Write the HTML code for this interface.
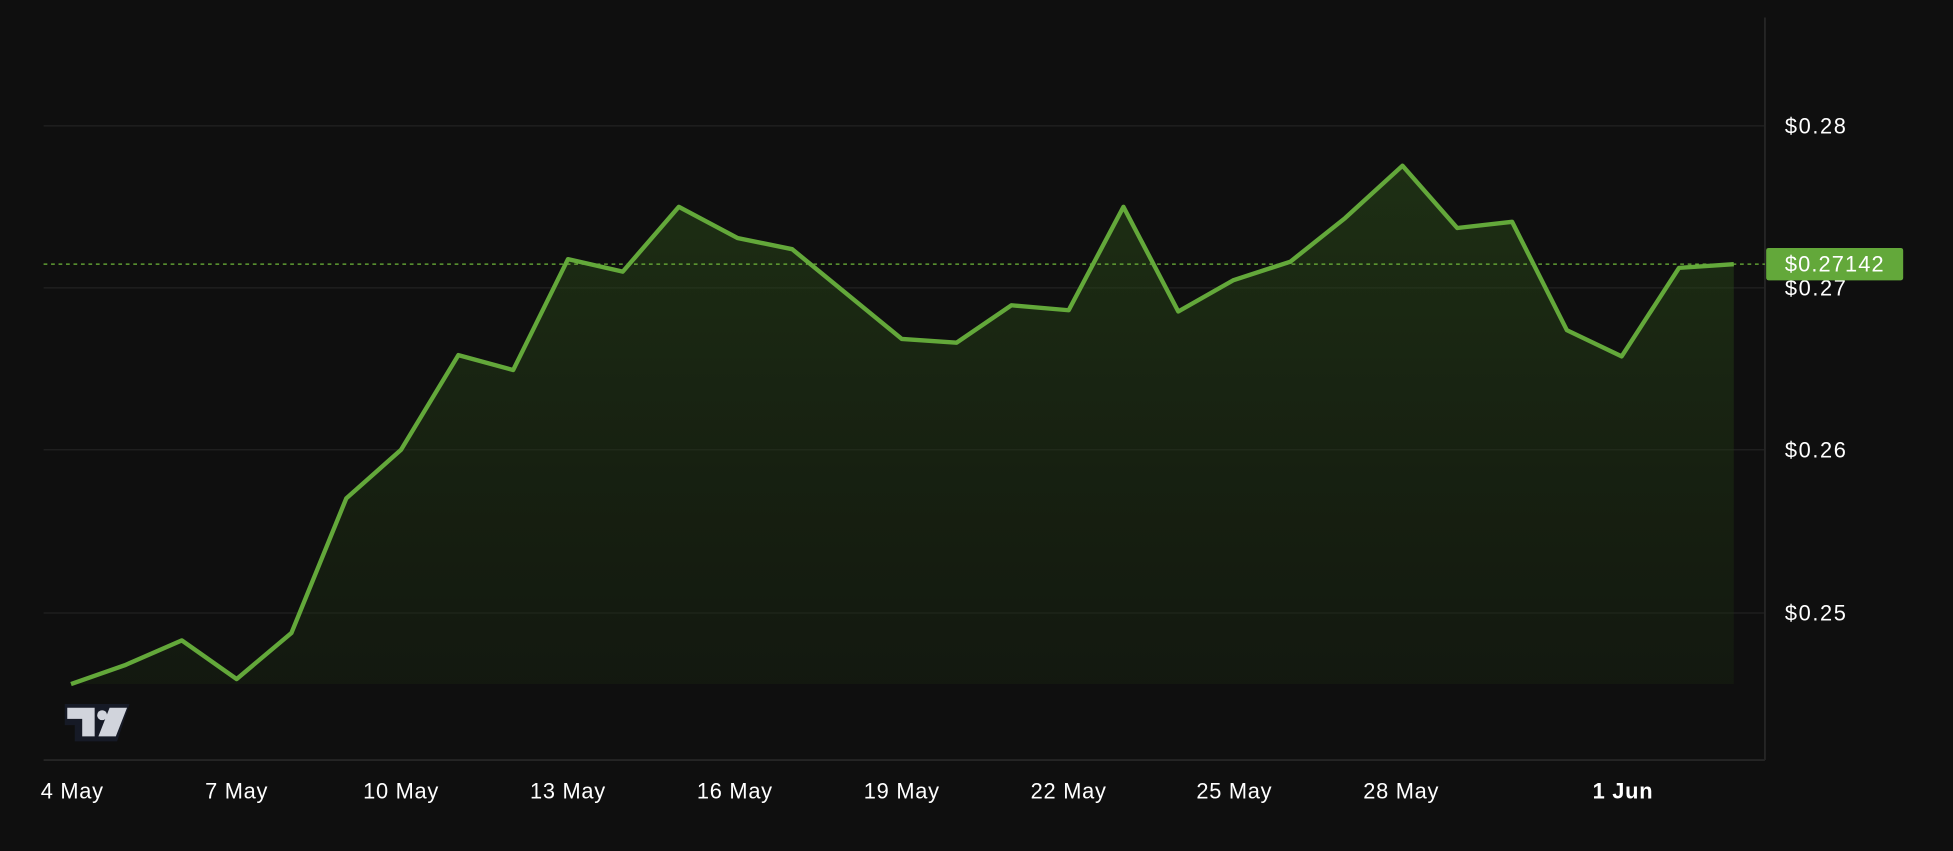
<!DOCTYPE html>
<html><head><meta charset="utf-8"><style>
html,body{margin:0;padding:0;background:#0f0f0f;}
svg{display:block}
text{font-family:"Liberation Sans",sans-serif;fill:#fff;}
</style></head><body>
<svg width="1953" height="851" viewBox="0 0 1568 683" preserveAspectRatio="none">
<defs><linearGradient id="g" x1="0" y1="0" x2="0" y2="1">
<stop offset="0" stop-color="#2a4a18" stop-opacity="0.55"/>
<stop offset="1" stop-color="#1a2a10" stop-opacity="0.35"/></linearGradient></defs>
<rect width="1568" height="683" fill="#0f0f0f"/>
<g stroke="#222" stroke-width="1">
<line x1="35" y1="101" x2="1417" y2="101"/>
<line x1="35" y1="231" x2="1417" y2="231"/>
<line x1="35" y1="361" x2="1417" y2="361"/>
<line x1="35" y1="492" x2="1417" y2="492"/>
</g>
<g stroke="#252525" stroke-width="1.5">
<line x1="1417" y1="14" x2="1417" y2="610"/>
<line x1="35" y1="610" x2="1417" y2="610"/>
</g>
<polygon fill="url(#g)" points="57,549 100,534 146,514 190,545 234,508 278,400 322,361 368,285 412,297 456,208 500,218 545,166 592,191 636,200 680,236 724,272 768,275 812,245 858,249 902,166 946,250 990,225 1036,210 1080,175 1126,133 1170,183 1214,178 1258,265 1302,286 1348,215 1392,212 1392,549"/>
<line x1="35" y1="212" x2="1417" y2="212" stroke="#6fb83a" stroke-width="1" stroke-dasharray="3,3"/>
<polyline fill="none" stroke="#63a83a" stroke-width="3.5" stroke-linejoin="round" points="57,549 100,534 146,514 190,545 234,508 278,400 322,361 368,285 412,297 456,208 500,218 545,166 592,191 636,200 680,236 724,272 768,275 812,245 858,249 902,166 946,250 990,225 1036,210 1080,175 1126,133 1170,183 1214,178 1258,265 1302,286 1348,215 1392,212"/>
<g font-size="17.5" letter-spacing="1.3">
<text x="1433" y="107">$0.28</text>
<text x="1433" y="237">$0.27</text>
<text x="1433" y="367">$0.26</text>
<text x="1433" y="498">$0.25</text>
</g>
<rect x="1418" y="199" width="110" height="26" rx="2" fill="#63a83a"/>
<text x="1433" y="218" font-size="17.5" letter-spacing="0.9">$0.27142</text>
<g transform="translate(52,565)">
<path d="M0,0 H52 L42,30 H8 V17 H0 Z" fill="#161a26"/>
<path d="M2,3 H24 V26 H14 V12 H2 Z" fill="#d1d4dc"/>
<circle cx="30" cy="9" r="4" fill="#d1d4dc"/>
<path d="M36,3 H50 L41,26 H27 Z" fill="#d1d4dc"/>
</g>
<g font-size="17.5" letter-spacing="0.6" text-anchor="middle">
<text x="58" y="641">4 May</text>
<text x="190" y="641">7 May</text>
<text x="322" y="641">10 May</text>
<text x="456" y="641">13 May</text>
<text x="590" y="641">16 May</text>
<text x="724" y="641">19 May</text>
<text x="858" y="641">22 May</text>
<text x="991" y="641">25 May</text>
<text x="1125" y="641">28 May</text>
<text x="1303" y="641" font-weight="bold">1 Jun</text>
</g>
</svg>
</body></html>
